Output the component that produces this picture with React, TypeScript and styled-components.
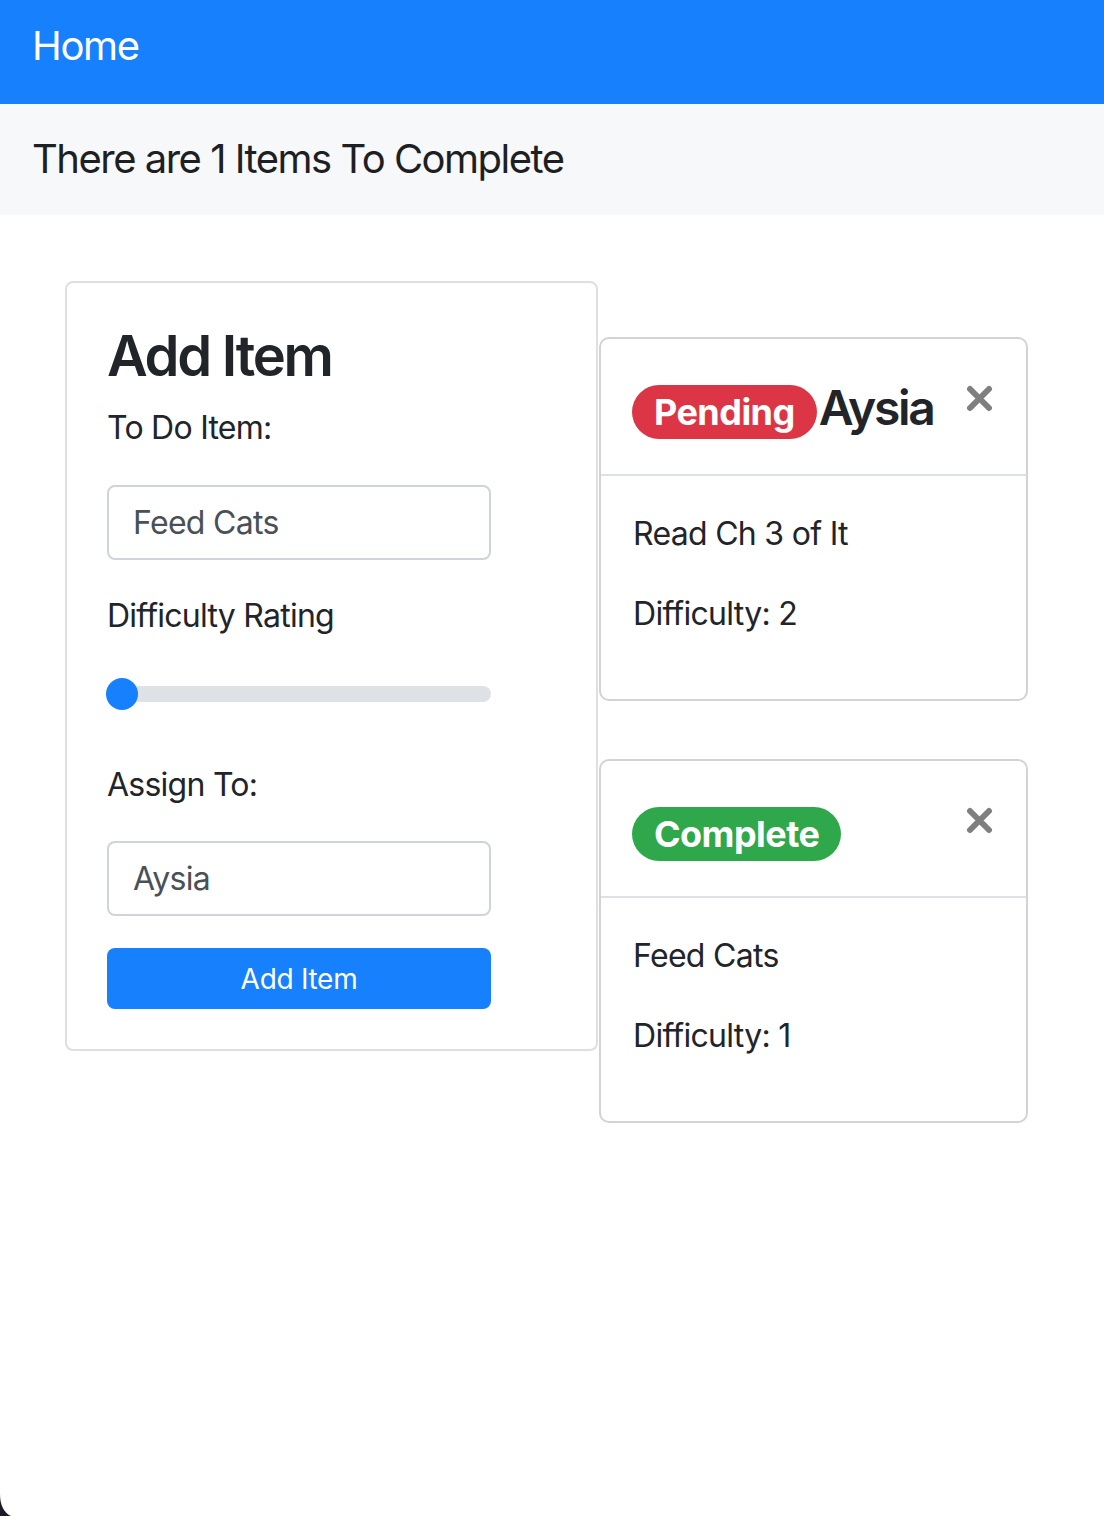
import React from "react";
import styled, { createGlobalStyle } from "styled-components";

const GlobalStyle = createGlobalStyle`
  html, body {
    margin: 0;
    padding: 0;
    background: #ffffff;
  }
  body {
    font-family: Inter, "Noto Sans", "Liberation Sans", sans-serif;
    color: #212529;
  }
  * { box-sizing: border-box; }
`;

const Page = styled.div`
  width: 1104px;
  min-height: 1516px;
  background: #ffffff;
`;

const NavBar = styled.header`
  height: 104px;
  background: #1780fd;
  padding: 22px 32px 0;
`;

const Brand = styled.div`
  color: #ffffff;
  font-size: 40px;
  line-height: 48px;
  font-weight: 400;
  letter-spacing: -1.3px;
`;

const CountBar = styled.div`
  height: 111px;
  background: #f7f8fa;
  padding: 31px 32px 0;
`;

const CountText = styled.h2`
  margin: 0;
  font-size: 40px;
  line-height: 48px;
  font-weight: 400;
  color: #1d1f22;
  letter-spacing: -1.5px;
`;

const Main = styled.main`
  display: flex;
  align-items: flex-start;
  padding: 66px 0 0 65px;
`;

const FormCard = styled.section`
  width: 533px;
  border: 2px solid #dfdfdf;
  border-radius: 8px;
  padding: 40px 40px 40px 40px;
  display: flex;
  flex-direction: column;
  align-items: flex-start;
`;

const FormTitle = styled.h3`
  margin: 0 0 14px;
  font-size: 56px;
  line-height: 67px;
  font-weight: 600;
  color: #212529;
  letter-spacing: -2.3px;
`;

const Label = styled.label<{ $gap: number }>`
  display: block;
  font-size: 32px;
  line-height: 48px;
  color: #212529;
  margin-bottom: ${(p) => p.$gap}px;
  letter-spacing: -0.75px;
`;

const TextInput = styled.div<{ $gap: number }>`
  width: 384px;
  height: 75px;
  border: 2px solid #ced4da;
  border-radius: 8px;
  padding: 0 24px;
  display: flex;
  align-items: center;
  font-size: 32px;
  color: #495057;
  margin-bottom: ${(p) => p.$gap}px;
  letter-spacing: -0.7px;
`;

const Range = styled.div`
  position: relative;
  width: 384px;
  height: 32px;
  margin: 38px 0 51px;
  display: flex;
  align-items: center;
`;

const Track = styled.div`
  width: 100%;
  height: 16px;
  border-radius: 8px;
  background: #dee2e6;
`;

const Thumb = styled.div`
  position: absolute;
  left: -1px;
  top: 0;
  width: 32px;
  height: 32px;
  border-radius: 50%;
  background: #1780fd;
`;

const PrimaryButton = styled.button`
  width: 384px;
  height: 61px;
  border: none;
  border-radius: 8px;
  background: #1780fd;
  color: #ffffff;
  font-family: inherit;
  font-size: 28px;
  font-weight: 400;
  letter-spacing: -0.3px;
  padding: 0;
`;

const TaskColumn = styled.div`
  display: flex;
  flex-direction: column;
  gap: 58px;
  padding-top: 56px;
  margin-left: 1px;
`;

const TaskCard = styled.article`
  width: 429px;
  border: 2px solid #d3d3d3;
  border-radius: 10px;
  overflow: hidden;
`;

const TaskHeader = styled.div`
  height: 137px;
  border-bottom: 2px solid #dee2e6;
  padding: 40px 33px 0 31px;
  display: flex;
  justify-content: space-between;
  align-items: flex-start;
`;

const TaskTitle = styled.h4`
  margin: 0;
  font-size: 48px;
  line-height: 58px;
  font-weight: 600;
  color: #212529;
  letter-spacing: -2.3px;
`;

const Badge = styled.span<{ $tone: "danger" | "success" }>`
  display: inline-block;
  font-size: 36px;
  line-height: 36px;
  font-weight: 700;
  color: #ffffff;
  padding: 9px 22px;
  border-radius: 27px;
  letter-spacing: -0.55px;
  margin-right: 2px;
  background: ${(p) => (p.$tone === "danger" ? "#dc3545" : "#2ea84a")};
`;

const CloseButton = styled.button`
  border: none;
  background: transparent;
  padding: 0;
  margin-top: 6px;
  width: 27px;
  height: 27px;
  display: flex;
  cursor: pointer;
`;

const TaskBody = styled.div`
  padding: 34px 32px 29px;
`;

const TaskLine = styled.p`
  margin: 0 0 32px;
  font-size: 32px;
  line-height: 48px;
  color: #212529;
  letter-spacing: -0.7px;
`;

const WindowCorner = styled.svg`
  position: fixed;
  left: 0;
  bottom: 0;
  width: 12px;
  height: 22px;
`;

const CloseIcon = () => (
  <svg width="27" height="27" viewBox="0 0 27 27">
    <path
      d="M4 4 L23 23 M23 4 L4 23"
      stroke="#7f7f7f"
      strokeWidth="6"
      strokeLinecap="round"
      fill="none"
    />
  </svg>
);

type Task = {
  status: "Pending" | "Complete";
  assignee: string;
  text: string;
  difficulty: number;
};

const tasks: Task[] = [
  { status: "Pending", assignee: "Aysia", text: "Read Ch 3 of It", difficulty: 2 },
  { status: "Complete", assignee: "", text: "Feed Cats", difficulty: 1 },
];

export default function App() {
  return (
    <Page>
      <GlobalStyle />
      <NavBar>
        <Brand>Home</Brand>
      </NavBar>
      <CountBar>
        <CountText>There are 1 Items To Complete</CountText>
      </CountBar>
      <Main>
        <FormCard>
          <FormTitle>Add Item</FormTitle>
          <Label $gap={33}>To Do Item:</Label>
          <TextInput $gap={32}>Feed Cats</TextInput>
          <Label $gap={0}>Difficulty Rating</Label>
          <Range>
            <Track />
            <Thumb />
          </Range>
          <Label $gap={32}>Assign To:</Label>
          <TextInput $gap={32}>Aysia</TextInput>
          <PrimaryButton>Add Item</PrimaryButton>
        </FormCard>
        <TaskColumn>
          {tasks.map((t) => (
            <TaskCard key={t.text}>
              <TaskHeader>
                <TaskTitle>
                  <Badge $tone={t.status === "Pending" ? "danger" : "success"}>
                    {t.status}
                  </Badge>
                  {t.assignee}
                </TaskTitle>
                <CloseButton aria-label="Close">
                  <CloseIcon />
                </CloseButton>
              </TaskHeader>
              <TaskBody>
                <TaskLine>{t.text}</TaskLine>
                <TaskLine>Difficulty: {t.difficulty}</TaskLine>
              </TaskBody>
            </TaskCard>
          ))}
        </TaskColumn>
      </Main>
      <WindowCorner viewBox="0 0 12 22">
        <path d="M0 0 C0 11 4 19 11 22 L0 22 Z" fill="#1c1c28" />
      </WindowCorner>
    </Page>
  );
}
